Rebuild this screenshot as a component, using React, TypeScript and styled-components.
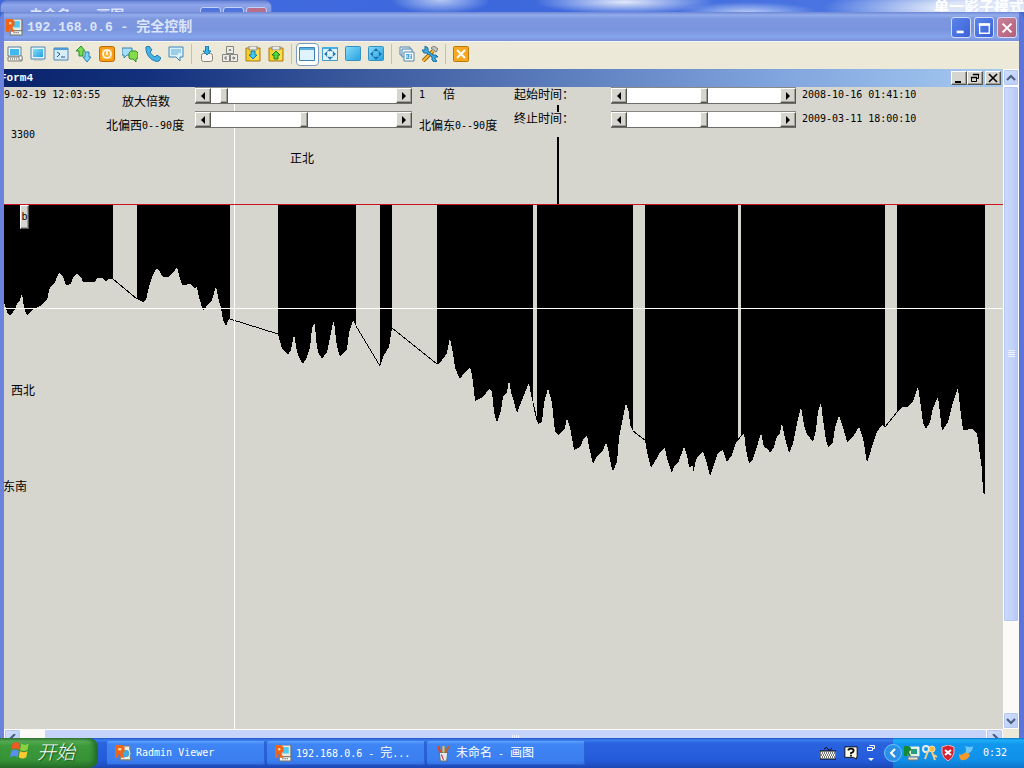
import React, { useState } from "react";
import styled, { createGlobalStyle, css } from "styled-components";

const face = "#d6d5ce";
const mono = '"DejaVu Sans Mono", "Noto Sans CJK SC", monospace';
const serifMono = '"Liberation Mono", "Noto Sans CJK SC", monospace';

const GlobalStyle = createGlobalStyle`
  * { box-sizing: border-box; }
  body { margin: 0; background: #3a6bd0; }
  button { margin: 0; padding: 0; font: inherit; color: inherit; border: 0; background: none; }
  svg { display: block; }
`;

const Desktop = styled.div`
  display: flex;
  flex-direction: column;
  min-height: 100vh;
  overflow: hidden;
  font: 12px/14px ${mono};
  color: #000;
`;

const Num = styled.span`
  font-size: 10px;
  white-space: pre;
`;

/* ---------- wallpaper strip with the window behind ---------- */

const Wallpaper = styled.div`
  display: flex;
  justify-content: space-between;
  height: 12px;
  overflow: hidden;
  background:
    radial-gradient(ellipse 50px 14px at 43% 0, #b5c8f3 0, transparent 100%),
    radial-gradient(ellipse 90px 12px at 61% 2px, #e3e9fa 0, transparent 100%),
    radial-gradient(ellipse 70px 10px at 73% 12px, #b4c8f4 0, transparent 100%),
    radial-gradient(ellipse 160px 22px at 96% 8px, #dde6f8 30%, transparent 100%),
    linear-gradient(90deg, #4169de, #3d68dc 50%, #527ce4);
`;

const BackWindow = styled.div`
  display: flex;
  gap: 2px;
  width: 272px;
  height: 28px;
  padding: 6px 4px 0 28px;
  border-radius: 7px 7px 0 0;
  border: 1px solid #5b78cf;
  background: linear-gradient(#6b85d8, #8ea5ea 4px, #7b93df 12px);
`;

const BackTitle = styled.span`
  flex: 1;
  padding-top: 1px;
  font: bold 14px/16px ${serifMono};
  color: #d8e2fb;
`;

const BackButton = styled.span<{ $red?: boolean }>`
  width: 21px;
  height: 20px;
  border: 1px solid #c3d0f5;
  border-radius: 3px;
  background: ${(p) => (p.$red ? "#b96f8c" : "#4f74dc")};
`;

const ShadowText = styled.span`
  font: bold 15px/12px "Noto Sans CJK SC", sans-serif;
  color: #fff;
  white-space: nowrap;
`;

/* ---------- main window ---------- */

const Window = styled.main`
  display: flex;
  flex-direction: column;
  flex: 1;
  border-left: 4px solid #6b83dc;
  border-right: 5px solid #5a74dc;
  border-radius: 7px 7px 0 0;
  background: #7b96e0;
`;

const TitleBar = styled.header`
  display: flex;
  align-items: center;
  gap: 3px;
  height: 29px;
  padding: 2px 2px 0 2px;
  background: linear-gradient(#6c86d4 0, #93aceb 3px, #7d97df 7px, #7a95df 18px, #86a5ec 25px, #7790d8);
`;

const TitleIcon = styled.span`
  width: 18px;
`;

const TitleText = styled.h1`
  flex: 1;
  margin: 0;
  font: bold 13px/18px ${serifMono};
  color: #dbe4fa;
  white-space: pre;
`;

const Han = styled.span`
  font-size: 14px;
`;

const CaptionButton = styled.button<{ $close?: boolean }>`
  display: grid;
  place-items: center;
  width: 20px;
  height: 21px;
  border: 1px solid #d2dcf8;
  border-radius: 3px;
  background: ${(p) =>
    p.$close
      ? "linear-gradient(135deg, #c9829b, #b35f78)"
      : "linear-gradient(135deg, #5c84ea, #3a62d8)"};
`;

const Toolbar = styled.div`
  display: flex;
  align-items: center;
  height: 28px;
  padding-bottom: 3px;
  border-top: 1px solid #f6f5ef;
  background: #ece9d8;
`;

const ToolButton = styled.button<{ $on?: boolean }>`
  display: flex;
  align-items: center;
  padding-left: 3px;
  width: 23px;
  height: 23px;
  border-radius: 4px;
  ${(p) =>
    p.$on &&
    css`
      padding-left: 2px;
      border: 1px solid #7d9cc4;
      background: #fff;
    `}
`;

const ToolGap = styled.span`
  width: 8px;
  height: 20px;
  background: linear-gradient(90deg, transparent 3px, #c5c2b2 3px, #c5c2b2 4px, transparent 4px);
`;

const Workspace = styled.div`
  display: flex;
  flex: 1;
`;

const Form = styled.section`
  display: flex;
  flex-direction: column;
  flex: 1;
  min-width: 0;
  background: ${face};
`;

const FormTitle = styled.header`
  display: flex;
  align-items: center;
  height: 18px;
  padding-right: 2px;
  background: linear-gradient(90deg, #0a246a, #12307c 14%, #3c5a9e 36%, #7ea2dc 76%, #a6caf0);
`;

const FormName = styled.h2`
  flex: 1;
  margin: 0;
  overflow: hidden;
  font: bold 11px/18px ${serifMono};
  color: #fff;
  text-indent: -4px;
`;

const raised = css`
  border: 1px solid;
  border-color: #fff #55544f #55544f #fff;
  background: ${face};
  box-shadow: inset -1px -1px 0 #a09f98;
`;

const MdiButton = styled.button<{ $apart?: boolean }>`
  display: grid;
  place-items: center;
  width: 16px;
  height: 14px;
  margin-left: ${(p) => (p.$apart ? 2 : 0)}px;
  ${raised}
`;

/* The plot fills the form; controls and labels share its grid cell. */
const Canvas = styled.div`
  position: relative;
  display: grid;
  flex: 1;
  min-height: 420px;
  & > * { grid-area: 1 / 1; }
`;

const Plot = styled.svg`
  width: 100%;
  height: 100%;
`;

const Controls = styled.div`
  position: relative;
  display: flex;
  align-items: flex-start;
  align-self: start;
`;

const Column = styled.div<{ $width: number; $top?: number; $gap: number }>`
  display: flex;
  flex-direction: column;
  flex: none;
  gap: ${(p) => p.$gap}px;
  width: ${(p) => p.$width}px;
  padding-top: ${(p) => p.$top ?? 0}px;
  white-space: pre;
`;

const Line = styled.span<{ $indent?: number }>`
  display: flex;
  align-items: center;
  height: 14px;
  padding-left: ${(p) => p.$indent ?? 0}px;
`;

const FieldLabel = styled.label`
  display: flex;
  align-items: center;
  height: 14px;
`;

const UnitLine = styled(Line)`
  gap: 18px;
`;

const Scroll = styled.div<{ $width: number }>`
  display: flex;
  width: ${(p) => p.$width}px;
  height: 17px;
  border-bottom: 1px solid #6e6d68;
  border-top: 1px solid #8a8983;
  background: #fff;
`;

const ScrollButton = styled.button`
  display: grid;
  place-items: center;
  flex: none;
  width: 16px;
  ${raised}
`;

const Range = styled.input`
  appearance: none;
  flex: 1;
  min-width: 0;
  height: 15px;
  margin: 0;
  background: #fff;
  &::-webkit-slider-runnable-track { height: 15px; }
  &::-webkit-slider-thumb {
    appearance: none;
    width: 8px;
    height: 15px;
    ${raised}
  }
`;

const PlotLabel = styled.span<{ $x: number; $y: number }>`
  position: absolute;
  left: ${(p) => p.$x}px;
  top: ${(p) => p.$y}px;
`;

const Marker = styled.button`
  position: absolute;
  left: 16px;
  top: 118px;
  width: 9px;
  height: 24px;
  font-size: 10px;
  ${raised}
`;

/* ---------- XP scroll bars ---------- */

const arrowFace = css`
  display: grid;
  place-items: center;
  flex: none;
  border: 1px solid #fff;
  border-radius: 2px;
  background: linear-gradient(135deg, #d3e0fd, #b7cbf8);
  box-shadow: inset 0 0 0 1px #b4c7f1;
`;

const VBar = styled.div`
  display: flex;
  flex-direction: column;
  width: 16px;
  background: #fbfaf6;
`;

const VArrow = styled.button`
  height: 17px;
  ${arrowFace}
`;

const VThumb = styled.div`
  display: grid;
  place-items: center;
  flex: 535;
  border: 1px solid #fff;
  border-radius: 2px;
  background: linear-gradient(90deg, #cbd9fc, #c3d2fb 60%, #b2c5f4);
  box-shadow: inset 0 0 0 1px #b4c7f1;
`;

const VSpace = styled.div`
  flex: 90;
`;

const HBar = styled.div`
  display: flex;
  height: 9px;
  overflow: hidden;
  background: #fbfaf6;
`;

const HArrow = styled.button`
  width: 17px;
  height: 17px;
  ${arrowFace}
`;

const HThumb = styled.div`
  display: grid;
  place-items: center;
  flex: 1;
  height: 17px;
  margin-left: 24px;
  border-top: 1px solid #fff;
  border-radius: 2px;
  background: #c6d4fb;
`;

const SizeGrip = styled.div`
  width: 16px;
  height: 17px;
  background: #ece9d8;
`;

/* ---------- task bar ---------- */

const Taskbar = styled.footer`
  display: flex;
  align-items: stretch;
  height: 30px;
  color: #fff;
  background: linear-gradient(#1f4fbd 0, #3b7ff0 2px, #2a63de 5px, #245bdb 22px, #1c48b4);
`;

const Start = styled.button`
  display: flex;
  align-items: center;
  gap: 7px;
  width: 98px;
  margin-right: 9px;
  padding: 0 0 4px 10px;
  border-radius: 0 9px 9px 0;
  background: linear-gradient(#3a7f3a 0, #5aad57 3px, #3b9a3b 8px, #369236 22px, #276f2a);
  box-shadow: inset -4px 0 5px #236a28;
  font: italic 300 19px/24px "Noto Sans CJK SC", sans-serif;
  text-shadow: 1px 1px 1px #1d4f20;
`;

const Task = styled.button`
  display: flex;
  align-items: center;
  gap: 4px;
  width: 158px;
  height: 24px;
  margin: 3px 2px 0 0;
  padding-left: 8px;
  border-radius: 2px;
  white-space: pre;
  background: linear-gradient(#64a2fb 0, #3f86f5 3px, #3a7df0 20px, #3470e2);
  box-shadow: inset -1px -1px 0 #2c62cf;
`;

const Language = styled.div`
  display: flex;
  align-items: center;
  gap: 8px;
  margin-left: auto;
  padding-right: 17px;
`;

const Tray = styled.div`
  display: flex;
  align-items: center;
  gap: 2px;
  width: 131px;
  background: linear-gradient(#1272c4 0, #1cb0f8 2px, #1397ee 6px, #1090e8 22px, #0d75cb);
`;

const TrayToggle = styled.button`
  width: 18px;
  margin-left: -9px;
`;

const Clock = styled.time`
  margin-left: auto;
  padding-right: 17px;
  font-size: 10px;
`;

/* ---------- icons ---------- */

const Icon = ({ size = 16, children }: { size?: number; children: React.ReactNode }) => (
  <svg width={size} height={size} viewBox="0 0 16 16" aria-hidden="true">
    {children}
  </svg>
);

const RadminIcon = () => (
  <Icon size={17}>
    <path d="M5 0h10v11H5z" fill="#eceade" stroke="#6b6b68" />
    <path d="M7 2h6v6H7z" fill="#4ccaf4" />
    <path d="M4 11h11v4H4z" fill="#f8f7ee" stroke="#77756d" />
    <path d="M7 13h1m1 0h1m1 0h1" stroke="#333" />
    <path d="M0 0h6l2 2v4L6 8l2 4H5L4 9H3v3H0z" fill="#ef6416" />
    <path d="M3 3h2v2H3z" fill="#ffe0b5" />
  </Icon>
);

const ViewerIcon = () => (
  <Icon size={17}>
    <path d="M5 1h9v9l1 4H5z" fill="#f1eee0" stroke="#7d7b72" />
    <circle cx="10" cy="8" r="4" fill="#45a9dc" stroke="#e5f4fa" />
    <path d="M0 0h7l2 2v4L7 8l2 4H6L4 9H3v3H0z" fill="#ef6416" />
    <path d="M3 3h3v2H3z" fill="#ffe0b5" />
  </Icon>
);

const Clipboard = ({ up }: { up?: boolean }) => (
  <Icon>
    <path d="M1 2h14v13H1z" fill="#f8ce26" stroke="#a87a16" />
    <path d="M4 0h8v4H4z" fill="#e9e8e4" stroke="#8a8880" />
    <path d="M5 4h9v10H5z" fill="#ffe86a" opacity=".6" />
    {up ? (
      <path d="M8 5l4 4h-2v4H6V9H4z" fill="#50d63c" stroke="#16841a" />
    ) : (
      <path d="M8 13l4-4h-2V5H6v4H4z" fill="#45c8ee" stroke="#157ba8" />
    )}
  </Icon>
);

const blueFace = "url(#blueFace)";

const MoveArrows = ({ fill }: { fill: string }) => (
  <>
    <path d="M8 2l2.500 3h-5zM8 14l2.500-3h-5zM2 8l3-2.500v5zM14 8l-3-2.500v5z" fill={fill} />
    <path d="M5 5h6v6H5z" fill="none" stroke={fill} strokeDasharray="1 1" opacity=".6" />
  </>
);

const toolGroups: { name: string; on?: boolean; art: React.ReactNode }[][] = [
  [
    {
      name: "完全控制",
      art: (
        <Icon>
          <path d="M1 1h13v9H1z" fill="#f4f7f8" stroke="#597f9c" />
          <path d="M3 3h9v6H3z" fill="#3fb9ef" />
          <path d="M1 11h14v4H1z" fill="#f2f0e6" stroke="#808078" />
          <path d="M3 13h8" stroke="#666" strokeDasharray="1 1" />
          <path d="M12 10h3v4h-3z" fill="#fff" stroke="#888" />
        </Icon>
      ),
    },
    {
      name: "仅查看",
      art: (
        <Icon>
          <path d="M1 1h14v12H1z" fill="#e4f4fb" stroke="#4f86b4" />
          <path d="M3 3h10v8H3z" fill={blueFace} />
          <path d="M4 14h9" stroke="#9fb0bb" />
        </Icon>
      ),
    },
    {
      name: "命令行",
      art: (
        <Icon>
          <path d="M1 2h14v12H1z" fill="#d5ecf9" stroke="#4f86b4" />
          <path d="M1 3h14" stroke="#4c9bd4" strokeWidth="2" />
          <path d="M4 6l3 2-3 3M8 11h4" fill="none" stroke="#24568c" />
        </Icon>
      ),
    },
    {
      name: "文件传输",
      art: (
        <Icon>
          <path d="M5 0l4 5H7v5H3V5H0z" fill="#79dd54" stroke="#2a8a2c" />
          <path d="M11 16l4-5h-2V6H9v5H7z" fill="#7fd6f4" stroke="#2a7fb4" />
        </Icon>
      ),
    },
    {
      name: "关机",
      art: (
        <Icon>
          <rect x="0.500" y="0.500" width="15" height="15" rx="2" fill="#f79a18" stroke="#bd6c08" />
          <rect x="3" y="3" width="10" height="10" fill="#fbb740" />
          <circle cx="8" cy="8" r="4" fill="none" stroke="#fff" strokeWidth="1.500" />
          <path d="M8 5v4" stroke="#fff" strokeWidth="1.500" />
        </Icon>
      ),
    },
    {
      name: "文字聊天",
      art: (
        <Icon>
          <path d="M0 2h10v7H5l-3 3V9H0z" fill="#a5dff7" stroke="#3a82b0" />
          <path d="M9 5h5l2 2v5l-2 1v3l-3-3H8l-1-1V7z" fill="#84dc4c" stroke="#2f8c28" />
        </Icon>
      ),
    },
    {
      name: "语音聊天",
      art: (
        <Icon>
          <path
            d="M1 1l3-1 3 4-2 2c1 2 3 4 5 5l2-2 4 3-2 3c-4 2-14-4-13-14z"
            fill="#44b4e8"
            stroke="#2379ad"
          />
        </Icon>
      ),
    },
    {
      name: "发送消息",
      art: (
        <Icon>
          <path d="M1 1h14v10h-3v4l-4-4H1z" fill="#d9f1fc" stroke="#3f86b6" />
          <path d="M3 4h10M3 6h10M3 8h7" stroke="#5aa9d4" />
        </Icon>
      ),
    },
  ],
  [
    {
      name: "接收",
      art: (
        <Icon>
          <rect x="2.500" y="7.500" width="11" height="8" rx="2" fill="#f4f3ef" stroke="#85847d" />
          <path d="M8 9l4-4H9.500V0h-3v5H4z" fill="#35b4e6" stroke="#1b7bb0" />
        </Icon>
      ),
    },
    {
      name: "组合键",
      art: (
        <Icon>
          <path d="M4.500.5h7v7h-7zM.5 8.500h7v7h-7zM8.500 8.500h7v7h-7z" fill="#edece8" stroke="#85847d" />
          <path d="M7 5l1-2 1 2M5 11H3v2h2M11 11h1l1 1-1 1h-1z" fill="none" stroke="#777" />
        </Icon>
      ),
    },
    { name: "取剪贴板", art: <Clipboard /> },
    { name: "设剪贴板", art: <Clipboard up /> },
  ],
  [
    {
      name: "正常",
      on: true,
      art: (
        <Icon>
          <path d="M.5 1.500h15v13H.5z" fill="#dff3fc" stroke="#3f81b0" />
          <path d="M1 3h14" stroke="#5db0e2" strokeWidth="2" />
        </Icon>
      ),
    },
    {
      name: "缩放",
      art: (
        <Icon>
          <path d="M.5 1.500h15v13H.5z" fill="#dff3fc" stroke="#3f9bd0" />
          <path d="M1 2h14" stroke="#43b0e8" strokeWidth="2" />
          <MoveArrows fill="#2379b4" />
        </Icon>
      ),
    },
    {
      name: "全屏",
      art: (
        <Icon>
          <rect x="0.500" y="0.500" width="15" height="14" rx="1" fill={blueFace} stroke="#3591c4" />
        </Icon>
      ),
    },
    {
      name: "全屏缩放",
      art: (
        <Icon>
          <rect x="0.500" y="0.500" width="15" height="14" rx="1" fill={blueFace} stroke="#3591c4" />
          <MoveArrows fill="#1a6fae" />
        </Icon>
      ),
    },
  ],
  [
    {
      name: "切换显示器",
      art: (
        <Icon>
          <path d="M1 1h10v8H1z" fill="#e9f4fa" stroke="#5585a8" />
          <path d="M3 3h10v8H3z" fill="#e9f4fa" stroke="#5585a8" />
          <path d="M5 6h10v9H5z" fill="#fff" stroke="#5585a8" />
          <path d="M7 8h6v5H7z" fill="#42a4dc" />
          <path d="M8 9v3M10 9h2l-2 3h2" stroke="#fff" fill="none" />
        </Icon>
      ),
    },
    {
      name: "选项",
      art: (
        <Icon>
          <path d="M1 15L11 5" stroke="#a3600e" strokeWidth="4" />
          <path d="M1 15L11 5" stroke="#f7bd2e" strokeWidth="2" />
          <path d="M9 2l3-2 4 3-2 3z" fill="#c5c7c4" stroke="#777" />
          <path
            d="M3 0l3 2v3l5 4h3l2 2-3 0v2l2 2-3 1-2-2v-3L5 7H2L0 4l3 0V3z"
            fill="#3eade0"
            stroke="#176a9c"
          />
        </Icon>
      ),
    },
  ],
  [
    {
      name: "关闭连接",
      art: (
        <Icon>
          <rect x="0.500" y="0.500" width="15" height="15" rx="1" fill="#f8a820" stroke="#bd7808" />
          <path d="M4 4l8 8M12 4l-8 8" stroke="#fff" strokeWidth="2" />
        </Icon>
      ),
    },
  ],
];

const Chevron = ({ d }: { d: string }) => (
  <svg width="10" height="8" viewBox="0 0 10 8" aria-hidden="true">
    <path d={d} fill="none" stroke="#4d6185" strokeWidth="2.200" />
  </svg>
);

const Triangle = ({ right }: { right?: boolean }) => (
  <svg width="4" height="8" viewBox="0 0 4 8" aria-hidden="true">
    <path d={right ? "M0 0l4 4-4 4z" : "M4 0L0 4l4 4z"} fill="#000" />
  </svg>
);

/* ---------- trajectory data ---------- */

const runs = [
  "4,302 7,312 10,316 13,312 16,308 17,303 20,300 22,293 23,300 24,308 27,315 32,310 40,306 47,300 50,287 55,283 57,277 59,273 63,277 66,285 71,284 73,277 77,274 82,279 83,282 95,282 97,278 102,278 106,281 109,279 113,279",
  "137,299 143,302 146,300 149,287 152,277 156,269 158,269 163,277 168,277 173,273 177,267 179,275 182,285 191,284 194,288 197,287 199,297 203,311 206,307 212,300 216,286 218,297 221,308 223,320 226,326 229,319 230,319",
  "278,334 282,349 288,355 291,350 294,334 297,352 300,359 303,364 307,357 310,348 312,328 315,323 316,340 318,352 322,359 327,352 330,338 332,327 334,321 336,340 338,350 340,356 347,349 349,333 353,320 356,326",
  "380,366 384,355 389,347 392,328",
  "437,364 440,363 447,353 450,338 453,353 455,368 460,379 465,372 469,368 471,370 473,382 475,401 483,397 489,389 492,392 494,412 497,423 501,410 503,397 507,392 509,380 511,392 514,402 517,413 522,400 526,390 529,383 531,395 533,403",
  "537,420 538,424 542,422 544,403 548,388 552,403 555,432 559,435 565,428 567,418 570,427 574,450 580,447 584,438 587,435 589,447 593,464 597,456 603,450 606,443 608,448 611,465 613,471 617,462 619,438 623,418 626,403 629,413 630,425 633,431",
  "645,440 647,452 651,468 657,458 660,452 665,448 667,458 672,473 674,466 678,463 684,447 687,455 689,467 693,466 693,471 694,471 695,463 698,456 703,451 707,464 710,476 715,462 718,453 723,450 727,462 732,455 735,445 738,440",
  "741,436 744,433 746,450 749,463 753,459 758,443 761,433 764,447 768,449 770,453 774,447 777,436 780,433 782,423 785,438 789,453 793,444 797,423 801,407 804,425 807,434 813,442 816,430 818,412 821,402 823,420 826,440 828,447 833,442 835,428 839,415 843,427 847,442 853,437 859,427 863,438 867,463 871,450 877,432 882,425 885,427",
  "897,412 903,407 907,407 913,402 918,387 921,407 923,423 926,429 930,422 933,408 938,397 940,413 942,431 948,422 953,402 958,388 960,407 963,430 972,429 977,433 979,448 982,470 983,493 985,494",
];

const firstX = (run: string) => run.split(",")[0];
const lastX = (run: string) => run.split(" ").pop()!.split(",")[0];

const ScrollField = ({ id, width, initial, label }: { id: string; width: number; initial: number; label: string }) => {
  const [value, setValue] = useState(initial);
  return (
    <Scroll $width={width}>
      <ScrollButton aria-label={`${label} -`} onClick={() => setValue(Math.max(0, value - 1))}>
        <Triangle />
      </ScrollButton>
      <Range
        id={id}
        type="range"
        aria-label={label}
        value={value}
        onChange={(e) => setValue(Number(e.target.value))}
      />
      <ScrollButton aria-label={`${label} +`} onClick={() => setValue(Math.min(100, value + 1))}>
        <Triangle right />
      </ScrollButton>
    </Scroll>
  );
};

export default function App() {
  return (
    <Desktop>
      <GlobalStyle />

      <Wallpaper>
        <BackWindow>
          <BackTitle>未命名 - 画图</BackTitle>
          <BackButton />
          <BackButton />
          <BackButton $red />
        </BackWindow>
        <ShadowText>单一影子模式</ShadowText>
      </Wallpaper>

      <Window>
        <TitleBar>
          <TitleIcon><RadminIcon /></TitleIcon>
          <TitleText>192.168.0.6 - <Han>完全控制</Han></TitleText>
          <CaptionButton aria-label="最小化">
            <Icon size={14}><path d="M3 11h8v3H3z" fill="#fff" /></Icon>
          </CaptionButton>
          <CaptionButton aria-label="最大化">
            <Icon size={14}>
              <path d="M3 4h11v10H3z" fill="none" stroke="#fff" strokeWidth="1.500" />
              <path d="M2 4h13" stroke="#fff" strokeWidth="3" />
            </Icon>
          </CaptionButton>
          <CaptionButton $close aria-label="关闭">
            <Icon size={14}><path d="M3 3l10 10M13 3L3 13" stroke="#fff" strokeWidth="2.400" /></Icon>
          </CaptionButton>
        </TitleBar>

        <Toolbar role="toolbar">
          {toolGroups.map((group, i) => (
            <React.Fragment key={i}>
              {i > 0 && <ToolGap />}
              {group.map((tool) => (
                <ToolButton key={tool.name} $on={tool.on} aria-label={tool.name}>
                  {tool.art}
                </ToolButton>
              ))}
            </React.Fragment>
          ))}
        </Toolbar>

        <Workspace>
          <Form>
            <FormTitle>
              <FormName>Form4</FormName>
              <MdiButton aria-label="最小化窗体">
                <svg width="10" height="10"><path d="M1 8h6v2H1z" /></svg>
              </MdiButton>
              <MdiButton aria-label="还原窗体">
                <svg width="10" height="10">
                  <path d="M3.500 1.500h5v4h-2M1.500 4.500h5v4h-5z" fill="none" stroke="#000" />
                  <path d="M3 1h6v1H3zM1 4h6v1H1z" stroke="#000" strokeWidth=".5" />
                </svg>
              </MdiButton>
              <MdiButton $apart aria-label="关闭窗体">
                <svg width="10" height="10"><path d="M1 1l8 8M9 1L1 9" stroke="#000" strokeWidth="1.600" /></svg>
              </MdiButton>
            </FormTitle>

            <Canvas>
              <Plot role="img" aria-label="井斜轨迹">
                <defs>
                  <linearGradient id="blueFace" x1="0" y1="0" x2="1" y2="1">
                    <stop offset="0" stopColor="#86dcfa" />
                    <stop offset="1" stopColor="#25a1df" />
                  </linearGradient>
                </defs>
                <g transform="translate(-4 -87)">
                  {runs.map((run) => (
                    <polygon
                      key={run}
                      points={`${firstX(run)},205 ${run} ${lastX(run)},205`}
                      shapeRendering="crispEdges"
                    />
                  ))}
                  <path
                    d="M113 279L137 299M230 319L278 334M356 326L380 366M392 328L437 364M533 403L537 420M633 431L645 440M738 440L741 436M885 427L897 412"
                    stroke="#000"
                    fill="none"
                    shapeRendering="crispEdges"
                  />
                  <path d="M557 105h2v7h-2zM557 137h2v68h-2z" />
                  <path d="M234.500 100V2000" stroke="#fff" />
                </g>
                <rect y="117" width="100%" height="1" fill="#c81420" />
                <rect y="221" width="100%" height="1" fill="#fff" />
              </Plot>

              <Controls>
                <Column $width={102} $top={1} $gap={26}>
                  <Line><Num>9-02-19 12:03:55</Num></Line>
                  <Line $indent={7}><Num>3300</Num></Line>
                </Column>
                <Column $width={89} $top={8} $gap={10}>
                  <FieldLabel htmlFor="zoom"><Line $indent={16}>放大倍数</Line></FieldLabel>
                  <FieldLabel htmlFor="bearing">北偏西<Num>0--90</Num>度</FieldLabel>
                </Column>
                <Column $width={224} $gap={7}>
                  <ScrollField id="zoom" width={217} initial={5} label="放大倍数" />
                  <ScrollField id="bearing" width={217} initial={50} label="方位" />
                </Column>
                <Column $width={95} $top={1} $gap={17}>
                  <UnitLine><Num>1</Num>倍</UnitLine>
                  <Line>北偏东<Num>0--90</Num>度</Line>
                </Column>
                <Column $width={97} $top={1} $gap={10}>
                  <FieldLabel htmlFor="from">起始时间：</FieldLabel>
                  <FieldLabel htmlFor="to">终止时间：</FieldLabel>
                </Column>
                <Column $width={191} $gap={7}>
                  <ScrollField id="from" width={185} initial={50} label="起始时间" />
                  <ScrollField id="to" width={185} initial={50} label="终止时间" />
                </Column>
                <Column $width={120} $top={1} $gap={10}>
                  <Line><Num>2008-10-16 01:41:10</Num></Line>
                  <Line><Num>2009-03-11 18:00:10</Num></Line>
                </Column>
              </Controls>

              <PlotLabel $x={286} $y={65}>正北</PlotLabel>
              <PlotLabel $x={7} $y={297}>西北</PlotLabel>
              <PlotLabel $x={-1} $y={393}>东南</PlotLabel>
              <Marker>b</Marker>
            </Canvas>
          </Form>

          <VBar>
            <VArrow aria-label="向上"><Chevron d="M1 6l4-4 4 4" /></VArrow>
            <VThumb>
              <svg width="7" height="8"><path d="M0 .5h7M0 2.500h7M0 4.500h7M0 6.500h7" stroke="#eef3ff" /></svg>
            </VThumb>
            <VSpace />
            <VArrow aria-label="向下"><Chevron d="M1 2l4 4 4-4" /></VArrow>
          </VBar>
        </Workspace>

        <HBar>
          <HArrow aria-label="向左"><Chevron d="M7 0L3 4l4 4" /></HArrow>
          <HThumb>
            <svg width="8" height="7"><path d="M.5 0v7M2.500 0v7M4.500 0v7M6.500 0v7" stroke="#eef3ff" /></svg>
          </HThumb>
          <HArrow aria-label="向右"><Chevron d="M3 0l4 4-4 4" /></HArrow>
          <SizeGrip />
        </HBar>
      </Window>

      <Taskbar>
        <Start>
          <Icon size={20}>
            <path d="M2 2q3-2 6 0L7 7Q4 5 1 7z" fill="#ee5a24" />
            <path d="M9 2q3 2 6 0l-1 5q-3 2-6 0z" fill="#8cd040" />
            <path d="M1 8q3-2 6 0l-1 5q-3-2-6 0z" fill="#5a8ef0" />
            <path d="M8 8q3 2 6 0l-1 5q-3 2-6 0z" fill="#fccb32" />
          </Icon>
          开始
        </Start>
        <Task><ViewerIcon /><Num>Radmin Viewer</Num></Task>
        <Task><RadminIcon /><span><Num>192.168.0.6 - </Num>完<Num>...</Num></span></Task>
        <Task>
          <Icon size={17}>
            <path d="M4 7h8l-1 8H5z" fill="#e4e8ea" stroke="#68737a" />
            <path d="M5 7L3 1" stroke="#e8401c" strokeWidth="2" />
            <path d="M8 7V1" stroke="#f4c22a" strokeWidth="2" />
            <path d="M10 7l3-6" stroke="#b4632a" strokeWidth="2" />
            <path d="M6 9l2 5" stroke="#c33" />
          </Icon>
          <span>未命名<Num> - </Num>画图</span>
        </Task>

        <Language>
          <Icon>
            <path d="M4 4q3-3 4 0t4-1" fill="none" stroke="#000" />
            <path d="M0 6h16v8H0z" fill="#f4f4f0" stroke="#000" />
            <path d="M2 8h13M1 10h14M2 12h13" stroke="#000" strokeDasharray="1 1" />
          </Icon>
          <Icon size={14}>
            <path d="M1 1h14v12h-1v2l-3-2H1z" fill="#fffde8" stroke="#000" />
            <path d="M5 5q0-2 3-2t3 2q0 2-3 3v1M8 10v2" fill="none" stroke="#000" strokeWidth="2" />
          </Icon>
          <svg width="10" height="18" aria-hidden="true">
            <path d="M3.500 1.500h5v3h-2M1.500 3.500h5v3h-5z" fill="none" stroke="#fff" />
            <path d="M2 14h6l-3 3z" fill="#fff" />
          </svg>
        </Language>

        <Tray>
          <TrayToggle aria-label="显示图标">
            <svg width="18" height="18">
              <circle cx="9" cy="9" r="8.500" fill="#2b8fe6" stroke="#6cc4f8" />
              <path d="M11 5L7 9l4 4" fill="none" stroke="#fff" strokeWidth="2" />
            </svg>
          </TrayToggle>
          <Icon>
            <path d="M5 2h10v9H5z" fill="#dff0e6" stroke="#e9eee9" />
            <path d="M7 4h6v5H7z" fill="#2a9c80" />
            <path d="M4 12h10v3H4z" fill="#e6e3d2" stroke="#777" />
            <path d="M0 1h5l2 2v2L5 7l2 4H5L3 8v3H0z" fill="#148a34" />
          </Icon>
          <Icon>
            <circle cx="4" cy="4" r="3" fill="none" stroke="#e6edf0" strokeWidth="2" />
            <circle cx="10" cy="4" r="3" fill="#f6b93a" stroke="#fbe3b0" />
            <path d="M6 6l-3 8M10 7l3 8M12 10l3 2" stroke="#f2cf84" strokeWidth="2" />
          </Icon>
          <Icon>
            <path d="M8 0l6 2v6q-1 5-6 8-5-3-6-8V2z" fill="#d52130" stroke="#f2b4b8" />
            <path d="M5 5l6 5M11 5l-6 5" stroke="#fff" strokeWidth="2" />
          </Icon>
          <Icon>
            <path d="M7 1q6 2 8 0 0 8-8 7 2-3 0-7z" fill="#6cc7f4" />
            <path d="M1 9q3 2 5-1 5-1 6 2-2 6-9 5-2-2-2-6z" fill="#f59a2c" />
          </Icon>
          <Clock>0:32</Clock>
        </Tray>
      </Taskbar>
    </Desktop>
  );
}
